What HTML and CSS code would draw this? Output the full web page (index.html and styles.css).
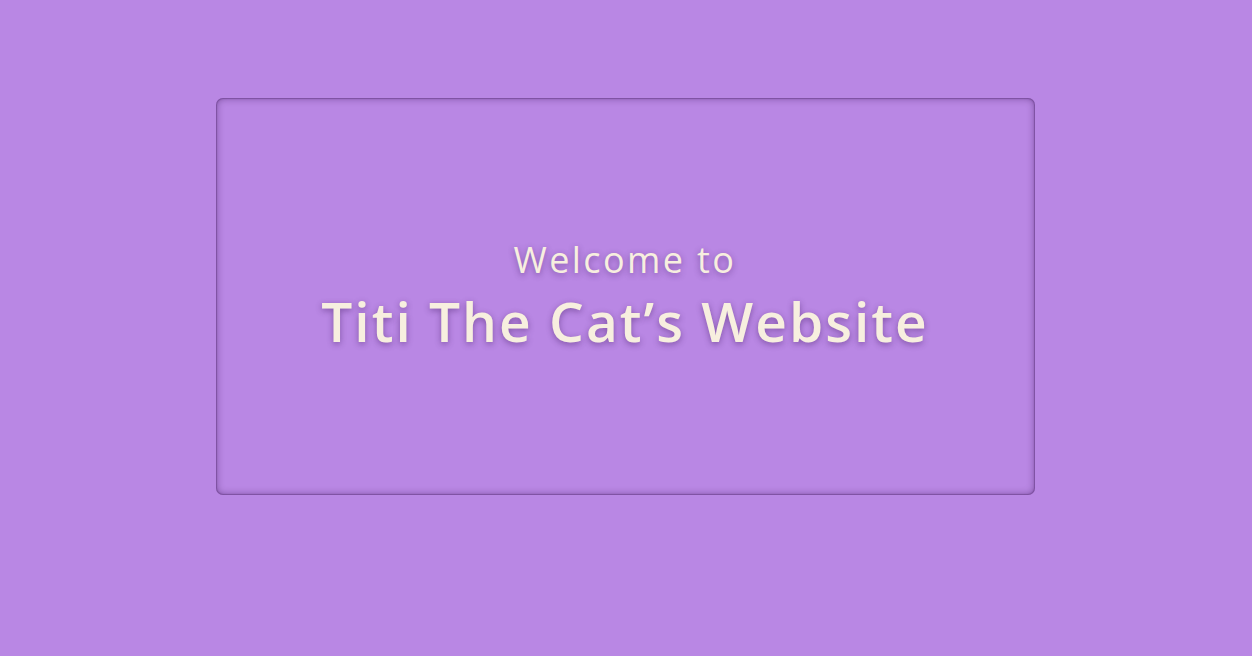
FILE: index.html
```html
<!DOCTYPE html>
<html>
<head>
<meta charset="utf-8">
<link rel="stylesheet" href="styles.css">
</head>
<body>
<main class="page">
  <section class="panel">
    <p class="welcome">Welcome to</p>
    <h1 class="title">Titi The Cat’s Website</h1>
  </section>
</main>
</body>
</html>
```
FILE: styles.css
```css
html, body {
  margin: 0;
  padding: 0;
  background: #b987e4;
  height: 100%;
}
.page {
  display: flex;
  justify-content: center;
  padding-top: 98px;
  padding-right: 2px;
  font-family: "Open Sans", "Noto Sans", sans-serif;
}
.panel {
  width: 819px;
  height: 397px;
  box-sizing: border-box;
  border-radius: 7px;
  box-shadow: inset 0 0 1px 1px rgba(80, 40, 110, 0.4), inset 0 0 7px 1px rgba(70, 30, 100, 0.45);
  display: flex;
  flex-direction: column;
  align-items: center;
  justify-content: center;
  color: #f7efdf;
  text-shadow: 0 2px 6px rgba(60, 20, 90, 0.45);
}
.welcome {
  margin: 0 0 4px;
  font-size: 36px;
  line-height: 44px;
  letter-spacing: 2.4px;
}
.title {
  margin: 0;
  font-size: 55px;
  font-weight: 600;
  line-height: 70px;
  letter-spacing: 2px;
}
```
